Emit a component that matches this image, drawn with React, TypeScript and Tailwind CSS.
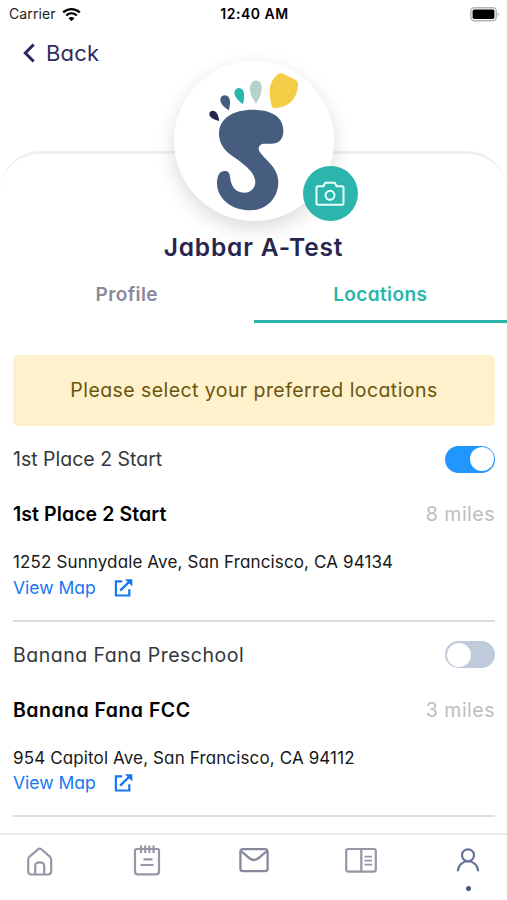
import { useState } from 'react';
import clsx from 'clsx';

interface Location {
  id: string;
  provider: string;
  name: string;
  miles: number;
  address: string;
  providerClass: string;
  nameClass: string;
}

const LOCATIONS: Location[] = [
  {
    id: 'first-place',
    provider: '1st Place 2 Start',
    name: '1st Place 2 Start',
    miles: 8,
    address: '1252 Sunnydale Ave, San Francisco, CA 94134',
    providerClass: 'tracking-[0px]',
    nameClass: 'tracking-[0.08px]',
  },
  {
    id: 'banana-fana',
    provider: 'Banana Fana Preschool',
    name: 'Banana Fana FCC',
    miles: 3,
    address: '954 Capitol Ave, San Francisco, CA 94112',
    providerClass: 'tracking-[0.5px]',
    nameClass: 'tracking-[0.48px]',
  },
];

function StatusBar() {
  return (
    <div className="grid h-7 grid-cols-3 items-center pr-[7px] pl-[9px] text-[14px] leading-none text-[#222] [font-feature-settings:normal]">
      <div className="flex items-center gap-[6px]">
        <span className="tracking-[0.1px]">Carrier</span>
        <svg width="19" height="15" viewBox="0 0 19 15" fill="none" stroke="#000" strokeWidth="2.3">
          <path d="M1.2 5.4C6 .9 13 .9 17.8 5.4" />
          <path d="M4.2 8.5C7.3 5.7 11.7 5.7 14.8 8.5" />
          <path d="M6.5 11.3Q9.5 8.8 12.5 11.3L9.5 14.2Z" fill="#000" stroke="none" />
        </svg>
      </div>
      <span className="text-center font-semibold tracking-[0.5px] whitespace-nowrap text-black">12:40 AM</span>
      <svg className="justify-self-end" width="30" height="15" viewBox="0 0 30 15">
        <rect x=".8" y=".8" width="25.5" height="12.9" rx="3.6" fill="#fff" stroke="#b5b5b5" strokeWidth="1.5" />
        <rect x="2.6" y="2.6" width="21.8" height="9.3" rx="1.6" fill="#000" />
        <path d="M27.7 5.2Q29.8 7.2 27.7 9.4Z" fill="#a5a5a5" />
      </svg>
    </div>
  );
}

function FootLogo() {
  return (
    <svg className="size-40" viewBox="28 18 480 480">
      <path
        d="M163 236C163 190 206 164 264 164C314 164 355 182 356 225C357 252 343 266 319 266H301C289 266 282 272 282 281C284 304 341 330 341 381C341 430 304 466 258 466C196 466 157 426 157 386C157 361 165 348 180 348C202 348 192 372 204 393C212 407 224 413 239 413C259 413 272 398 272 380C270 348 232 324 204 304C179 286 163 265 163 236Z"
        fill="#475d80"
      />
      <path d="M164 198C150 194 134 188 134 176C136 165 149 165 156 174C161 181 162 189 164 198Z" fill="#24224f" />
      <path d="M193 166C179 158 166 146 167 132C170 119 185 117 193 128C199 139 195 153 193 166Z" fill="#475d80" />
      <path d="M235 148C222 139 208 124 209 111C212 97 229 95 236 107C241 120 238 135 235 148Z" fill="#2bb5ad" />
      <path d="M274 146C264 133 254 114 256 96C259 70 288 70 291 94C293 113 283 132 274 146Z" fill="#b5d2c6" />
      <path d="M340 58Q347 52 355 56L392 74Q402 80 400 91C398 131 372 158 330 160Q323 160 321 153C317 138 315 122 315 108C315 87 326 68 340 58Z" fill="#f2cd45" />
    </svg>
  );
}

function CameraIcon() {
  return (
    <svg width="30" height="26" viewBox="0 0 30 26" fill="none" stroke="#e9fffd" strokeWidth="2" strokeLinejoin="round">
      <path d="M3 5.2H8.4L10.2 1.8H19.8L21.6 5.2H27Q28.5 5.2 28.5 6.7V22.3Q28.5 23.8 27 23.8H3Q1.5 23.8 1.5 22.3V6.7Q1.5 5.2 3 5.2Z" />
      <circle cx="15" cy="14.3" r="4.5" />
    </svg>
  );
}

function ExternalIcon() {
  return (
    <svg width="19" height="19" viewBox="0 0 19 19" fill="none" stroke="#1677f2" strokeWidth="2.2">
      <path d="M8.2 2.3H1.9V16.5H15.3V10.2" />
      <path d="M6.2 11.7L16 2" strokeWidth="2.4" />
      <path d="M11 .2H18.3V7.5Z" fill="#1677f2" stroke="none" />
    </svg>
  );
}

function Toggle({ on, onChange }: { on: boolean; onChange: () => void }) {
  return (
    <button
      type="button"
      role="switch"
      aria-checked={on}
      onClick={onChange}
      className={clsx(
        'flex h-[27px] w-[50px] items-center rounded-full px-[1.5px]',
        on ? 'justify-end bg-[#2196ff]' : 'justify-start bg-[#bfcadb]',
      )}
    >
      <span className="size-6 rounded-full bg-white" />
    </button>
  );
}

function LocationItem({ location, selected, onToggle }: { location: Location; selected: boolean; onToggle: () => void }) {
  return (
    <section className="h-[195.5px] border-b-2 border-[#dcdcdc] whitespace-nowrap">
      <div className="flex h-[66px] items-center justify-between text-[19.5px] text-[#33373b]">
        <span className={clsx('pt-[2px]', location.providerClass)}>{location.provider}</span>
        <Toggle on={selected} onChange={onToggle} />
      </div>
      <div className="flex h-[45px] items-center justify-between pt-px text-[19.5px]">
        <h2 className={clsx('font-semibold text-black', location.nameClass)}>{location.name}</h2>
        <span className="tracking-[0.5px] text-[#bdbdbd]">{location.miles} miles</span>
      </div>
      <p className="mt-[12px] h-[26px] text-[17px] leading-[26px] tracking-[0.13px] text-[#181818]">
        {location.address}
      </p>
      <a href="#map" className="flex h-[26px] items-center gap-[18px] text-[17.5px] text-[#1677f2]">
        <span>View Map</span>
        <ExternalIcon />
      </a>
    </section>
  );
}

function BottomNav() {
  return (
    <nav className="flex h-[67px] shrink-0 items-start justify-between border-t-2 border-[#ececec] bg-white pt-[9px] pr-[23px] pl-[24px]">
      <svg width="32" height="34" viewBox="0 0 32 34" fill="none" stroke="#9696a6" strokeWidth="2.2" strokeLinejoin="round">
        <path d="M14 5.3Q15.7 3.8 17.4 5.3L25.9 12.7Q27.2 14 27.2 16V27.2Q27.2 30.5 24 30.5H7.4Q4.2 30.5 4.2 27.2V16Q4.2 14 5.5 12.7Z" />
        <path d="M11.2 30V21.8Q11.2 18.4 15.7 18.4T20.2 21.8V30" />
      </svg>
      <svg width="32" height="34" viewBox="-2 0 32 34" fill="none" stroke="#9696a6" strokeWidth="2.2">
        <path d="M6.2 5H3.4Q2 5 2 6.5V27.5Q2 30.3 4.8 30.3H23.2Q26 30.3 26 27.5V6.5Q26 5 24.6 5H21.8M6.2 5H21.8M8 1.5V9M12.2 1.5V9M16.4 1.5V9M20.6 1.5V9M10.5 15.3H19.5M7.5 21H20.5" />
      </svg>
      <svg width="32" height="34" viewBox="0 0 32 34" fill="none" stroke="#86889e" strokeWidth="2.3">
        <rect x="2.4" y="5.2" width="27.2" height="22" rx="2.7" />
        <path d="M3.2 7.5C8.2 10 10.7 16 16 16S23.7 10 28.8 7.5" />
      </svg>
      <svg width="32" height="34" viewBox="1 0 32 34" fill="none" stroke="#9696a6" strokeWidth="2.2">
        <rect x="2.2" y="5" width="29.6" height="22.7" rx="2.2" />
        <path d="M17.3 5V27.7" />
        <path d="M20.5 12.6H28M20.5 16.6H28M20.5 20.6H28" strokeWidth="1.9" />
      </svg>
      <div className="flex w-8 flex-col items-center">
        <svg width="32" height="34" viewBox="0 0 32 34" fill="none" stroke="#667698" strokeWidth="2.2">
          <circle cx="16" cy="11.3" r="6" />
          <path d="M5.8 27.2C6.6 13.9 25.4 13.9 26.2 27.2" />
        </svg>
        <span className="mt-[8px] size-[5px] rounded-full bg-[#435883]" />
      </div>
    </nav>
  );
}

export default function App() {
  const [selected, setSelected] = useState<string[]>(['first-place']);
  const [tab, setTab] = useState('Locations');

  function toggle(id: string) {
    setSelected((prev) => (prev.includes(id) ? prev.filter((s) => s !== id) : [...prev, id]));
  }

  return (
    <div className="flex h-[900px] w-full flex-col overflow-hidden bg-white font-[Inter,sans-serif] [font-feature-settings:'cv11']">
      <StatusBar />
      <header className="h-[123px] shrink-0 pt-[10px] pl-[23px]">
        <button type="button" className="flex h-[30px] items-center gap-[11px] text-[22px] text-[#2e2e5b]">
          <svg width="12" height="20" viewBox="0 0 12 20" fill="none" stroke="#2c285c" strokeWidth="3">
            <path d="M10.7 1.5L2.3 10L10.7 18.5" />
          </svg>
          <span className="tracking-[0.2px]">Back</span>
        </button>
      </header>

      <main className="flex min-h-0 flex-1 flex-col rounded-t-[40px] border-t-[3px] border-[#efefef]">
        <div className="relative mx-auto -mt-[93px] size-40 shrink-0 rounded-full bg-white shadow-[0_7px_20px_rgba(0,0,0,0.15)]">
          <FootLogo />
          <button
            type="button"
            aria-label="Change photo"
            className="absolute top-[105px] left-[129px] flex size-[55px] items-center justify-center rounded-full bg-[#2bb5ad]"
          >
            <CameraIcon />
          </button>
        </div>
        <h1 className="mt-[10px] h-[32px] shrink-0 text-center text-[24.5px] leading-[32px] font-semibold tracking-[0.85px] text-[#28254f]">
          Jabbar A-Test
        </h1>

        <div className="grid h-[60px] shrink-0 grid-cols-2 text-[19px] font-semibold">
          {['Profile', 'Locations'].map((name) => (
            <button
              key={name}
              type="button"
              onClick={() => setTab(name)}
              className={clsx(
                'border-b-[3px] pt-[7px] tracking-[0.4px]',
                tab === name ? 'border-[#2bb5a9] text-[#2bb5a9]' : 'border-transparent text-[#8a899b]',
              )}
            >
              {name}
            </button>
          ))}
        </div>

        <div className="min-h-0 flex-1 pt-[32px] pr-[12px] pl-[13px]">
          <div className="flex h-[71px] items-center justify-center rounded-[5px] bg-[#fef1cc] text-[19.5px] whitespace-nowrap text-[#69560c]">
            <span className="tracking-[0.43px]">Please select your preferred locations</span>
          </div>
          {LOCATIONS.map((location) => (
            <LocationItem
              key={location.id}
              location={location}
              selected={selected.includes(location.id)}
              onToggle={() => toggle(location.id)}
            />
          ))}
        </div>
      </main>
      <BottomNav />
    </div>
  );
}
